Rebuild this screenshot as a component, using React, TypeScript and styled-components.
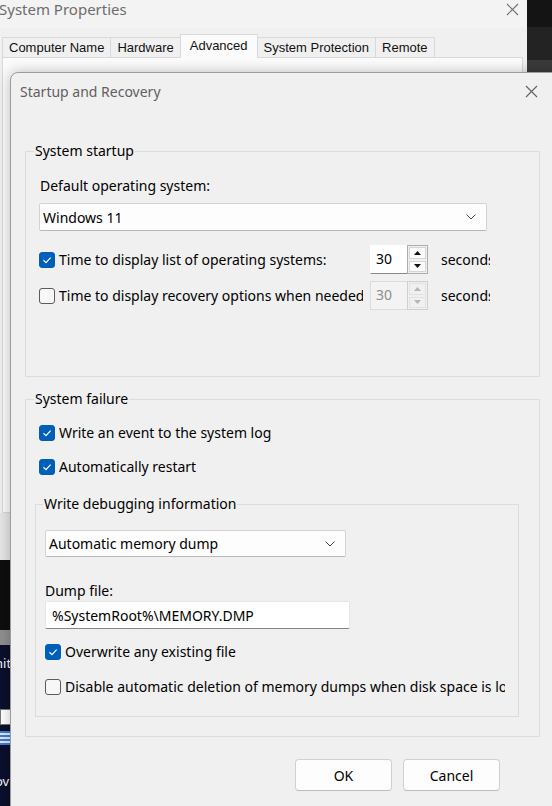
import React from 'react';
import styled, { createGlobalStyle } from 'styled-components';

const GlobalStyle = createGlobalStyle`
  *, *::before, *::after { box-sizing: border-box; }
  html, body { margin: 0; padding: 0; }
  body {
    background: #1c1c1c;
    font-family: "Noto Sans", "Open Sans", sans-serif;
    -webkit-font-smoothing: antialiased;
  }
`;

const Desktop = styled.div`
  position: relative;
  width: 552px;
  height: 806px;
  overflow: hidden;
  display: flex;
  flex-direction: column;
  background: #0b1030;
`;

/* ---------- window behind ---------- */

const BackRow = styled.div`
  display: flex;
  height: 513px;
  flex-shrink: 0;
`;

const BackWindow = styled.div`
  width: 527px;
  display: flex;
  flex-direction: column;
  background: #f0f0f0;
`;

const BackTitleBar = styled.div`
  height: 28px;
  display: flex;
  align-items: center;
  background: #f3f3f3;
  color: #6d6d6d;
  font-size: 15px;
  padding-right: 8px;
`;

const BackTitle = styled.span`
  flex: 1;
  margin-left: -1px;
  margin-top: -10px;
`;

const CloseIcon = styled.svg<{ $color: string }>`
  width: 13px;
  height: 13px;
  stroke: ${({ $color }) => $color};
  stroke-width: 1.1;
  flex-shrink: 0;
`;

const BackClose = styled.span`
  display: flex;
  margin-top: -10px;
`;

const TabStrip = styled.div`
  height: 30px;
  display: flex;
  align-items: flex-end;
  padding-left: 2px;
  font-family: "Liberation Sans", Arial, sans-serif;
  font-size: 13px;
  color: #111;
`;

const Tab = styled.div<{ $active?: boolean }>`
  height: ${({ $active }) => ($active ? 24 : 21)}px;
  padding: 0 ${({ $active }) => ($active ? 9 : 6)}px;
  display: flex;
  align-items: center;
  background: ${({ $active }) => ($active ? '#fbfbfb' : '#f0f0f0')};
  border: 1px solid #d9d9d9;
  border-bottom: ${({ $active }) => ($active ? 'none' : '1px solid #d9d9d9')};
  margin-right: -1px;
  white-space: nowrap;
  position: relative;
  z-index: ${({ $active }) => ($active ? 1 : 0)};
  padding-bottom: ${({ $active }) => ($active ? 3 : 0)}px;
`;

const TabPanel = styled.div`
  flex: 1;
  margin: -1px 4px 0 2px;
  background: #fbfbfb;
  border: 1px solid #d9d9d9;
`;

const RightDark = styled.div`
  flex: 1;
  background: linear-gradient(#141414 0 27px, #232323 27px 60px, #3a3a3a 60px);
`;

const Band = styled.div<{ $h: number; $bg: string }>`
  height: ${({ $h }) => $h}px;
  background: ${({ $bg }) => $bg};
  flex-shrink: 0;
`;

const NavyArea = styled.div`
  flex: 1;
  display: flex;
  flex-direction: column;
  background: #0a0f2c;
  color: #fff;
  font-size: 13px;
`;

const NavyText = styled.div<{ $top: number }>`
  margin-top: ${({ $top }) => $top}px;
  margin-left: -5px;
  line-height: 16px;
  white-space: nowrap;
`;

const DocIcon = styled.div`
  margin-top: 38px;
  width: 12px;
  height: 16px;
  background: #fff;
  border: 1px solid #777;
`;

const BlueLines = styled.div`
  margin-top: 6px;
  height: 14px;
  background: repeating-linear-gradient(#3d7bd6 0 2px, #dfe8f8 2px 4px);
`;

/* ---------- dialog ---------- */

const Dialog = styled.div`
  position: absolute;
  left: 10px;
  top: 72px;
  width: 560px;
  height: 760px;
  display: flex;
  flex-direction: column;
  background: #f0f0f0;
  border: 1px solid #9c9c9c;
  border-top-left-radius: 8px;
  box-shadow: 0 0 14px rgba(0, 0, 0, 0.25);
  color: #000;
  font-size: 14px;
`;

const DialogTitleBar = styled.div`
  height: 37px;
  flex-shrink: 0;
  display: flex;
  align-items: center;
  padding-left: 9px;
  padding-right: 31px;
  color: #5f5f5f;
`;

const DialogTitle = styled.span`
  flex: 1;
`;

const DialogBody = styled.div`
  padding: 31px 14px 0 14px;
  display: flex;
  flex-direction: column;
`;

const Group = styled.fieldset<{ $width: number; $top?: number }>`
  margin: ${({ $top }) => $top ?? 0}px 0 0 0;
  padding: 0;
  min-width: 0;
  width: ${({ $width }) => $width}px;
  border: 1px solid #dcdcdc;
`;

const Legend = styled.legend<{ $offset: number }>`
  margin-left: ${({ $offset }) => $offset}px;
  padding: 0 1px;
  line-height: 20px;
  font-size: 14px;
`;

const GroupContent = styled.div<{ $pad: string }>`
  display: flex;
  flex-direction: column;
  padding: ${({ $pad }) => $pad};
`;

const Label = styled.div<{ $top?: number; $lh?: number }>`
  margin-top: ${({ $top }) => $top ?? 0}px;
  line-height: ${({ $lh }) => $lh ?? 20}px;
`;

const Select = styled.div<{ $width: number; $height: number; $top?: number; $left?: number }>`
  margin-top: ${({ $top }) => $top ?? 0}px;
  margin-left: ${({ $left }) => $left ?? 0}px;
  width: ${({ $width }) => $width}px;
  height: ${({ $height }) => $height}px;
  display: flex;
  align-items: center;
  padding: 0 10px 0 3px;
  background: #fdfdfd;
  border: 1px solid #d3d3d3;
  border-bottom-color: #b8b8b8;
  border-radius: 2px;
`;

const SelectText = styled.span`
  flex: 1;
`;

const Chevron = styled.svg`
  width: 10px;
  height: 6px;
  fill: none;
  stroke: #404040;
  stroke-width: 1;
`;

const TextInput = styled.div<{ $width: number }>`
  margin-top: 1px;
  width: ${({ $width }) => $width}px;
  height: 28px;
  display: flex;
  align-items: center;
  padding-left: 6px;
  background: #fff;
  border: 1px solid #e6e6e6;
  border-bottom: 1px solid #858585;
  border-radius: 2px;
`;

const SpinRow = styled.div<{ $top: number }>`
  margin-top: ${({ $top }) => $top}px;
  margin-left: -1px;
  height: 29px;
  display: flex;
  align-items: center;
`;

const CheckRow = styled.div<{ $top?: number; $left?: number }>`
  margin-top: ${({ $top }) => $top ?? 0}px;
  margin-left: ${({ $left }) => $left ?? 0}px;
  height: 20px;
  display: flex;
  align-items: center;
  gap: 4px;
`;

const Box = styled.span<{ $checked: boolean }>`
  width: 16px;
  height: 16px;
  flex-shrink: 0;
  display: flex;
  align-items: center;
  justify-content: center;
  border-radius: 3px;
  background: ${({ $checked }) => ($checked ? '#005fb8' : '#f7f7f7')};
  border: 1px solid ${({ $checked }) => ($checked ? '#005fb8' : '#5b5b5b')};
`;

const CheckMark = styled.svg`
  width: 10px;
  height: 10px;
  fill: none;
  stroke: #fff;
  stroke-width: 1.2;
`;

const ClipLabel = styled.span<{ $width?: number; $indent?: number }>`
  ${({ $width }) => ($width ? `width: ${$width}px;` : '')}
  padding-left: ${({ $indent }) => $indent ?? 0}px;
  overflow: hidden;
  white-space: nowrap;
  line-height: 20px;
  flex-shrink: 0;
`;

const Spinner = styled.div<{ $disabled?: boolean }>`
  margin-left: 4px;
  display: flex;
  height: 29px;
  color: ${({ $disabled }) => ($disabled ? '#8e8e8e' : '#000')};
`;

const SpinValue = styled.div<{ $disabled?: boolean }>`
  width: 38px;
  height: 100%;
  padding: 1px 0 0 5px;
  line-height: 24px;
  background: ${({ $disabled }) => ($disabled ? '#f3f3f3' : '#fff')};
  border: 1px solid ${({ $disabled }) => ($disabled ? '#dcdcdc' : '#fff')};
  border-bottom: 1px solid ${({ $disabled }) => ($disabled ? '#dcdcdc' : '#8a8a8a')};
`;

const SpinButtons = styled.div<{ $disabled?: boolean }>`
  width: 21px;
  margin-left: -1px;
  display: flex;
  flex-direction: column;
  border: 1px solid ${({ $disabled }) => ($disabled ? '#cfcfcf' : '#adadad')};
  background: #f0f0f0;
`;

const SpinButton = styled.div<{ $disabled?: boolean }>`
  flex: 1;
  display: flex;
  align-items: center;
  justify-content: center;
  margin: 1px;
  background: ${({ $disabled }) => ($disabled ? '#f0f0f0' : '#fbfbfb')};
  border: 1px solid ${({ $disabled }) => ($disabled ? '#e2e2e2' : '#d6d6d6')};
`;

const Arrow = styled.svg<{ $disabled?: boolean }>`
  width: 7px;
  height: 4px;
  fill: ${({ $disabled }) => ($disabled ? '#b5b5b5' : '#111')};
`;

const Seconds = styled.span`
  margin-left: 13px;
  width: 49px;
  overflow: hidden;
  white-space: nowrap;
`;

const ButtonRow = styled.div`
  margin-top: 22px;
  width: 515px;
  padding-right: 40px;
  display: flex;
  justify-content: flex-end;
  gap: 11px;
`;

const Button = styled.button`
  width: 97px;
  height: 32px;
  font-family: inherit;
  font-size: 14px;
  color: #000;
  background: #fdfdfd;
  border: 1px solid #d0d0d0;
  border-bottom-color: #bcbcbc;
  border-radius: 4px;
  padding: 0;
`;

const Close = ({ color }: { color: string }) => (
  <CloseIcon $color={color} viewBox="0 0 13 13">
    <line x1="1" y1="1" x2="12" y2="12" />
    <line x1="12" y1="1" x2="1" y2="12" />
  </CloseIcon>
);

const Checkbox = ({ checked }: { checked: boolean }) => (
  <Box $checked={checked}>
    {checked && (
      <CheckMark viewBox="0 0 10 10">
        <polyline points="1.5,5.3 4,7.6 8.6,2.6" />
      </CheckMark>
    )}
  </Box>
);

const Dropdown = (props: { text: string; width: number; height: number; top?: number; left?: number }) => (
  <Select $width={props.width} $height={props.height} $top={props.top} $left={props.left}>
    <SelectText>{props.text}</SelectText>
    <Chevron viewBox="0 0 10 6">
      <polyline points="0.5,0.5 5,5 9.5,0.5" />
    </Chevron>
  </Select>
);

const NumberSpin = ({ value, disabled }: { value: string; disabled?: boolean }) => (
  <Spinner $disabled={disabled}>
    <SpinValue $disabled={disabled}>{value}</SpinValue>
    <SpinButtons $disabled={disabled}>
      <SpinButton $disabled={disabled}>
        <Arrow $disabled={disabled} viewBox="0 0 7 4">
          <polygon points="3.5,0 7,4 0,4" />
        </Arrow>
      </SpinButton>
      <SpinButton $disabled={disabled}>
        <Arrow $disabled={disabled} viewBox="0 0 7 4">
          <polygon points="0,0 7,0 3.5,4" />
        </Arrow>
      </SpinButton>
    </SpinButtons>
  </Spinner>
);

export default function App() {
  return (
    <>
      <GlobalStyle />
      <Desktop>
        <BackRow>
          <BackWindow>
            <BackTitleBar>
              <BackTitle>System Properties</BackTitle>
              <BackClose>
                <Close color="#707070" />
              </BackClose>
            </BackTitleBar>
            <TabStrip>
              <Tab>Computer Name</Tab>
              <Tab>Hardware</Tab>
              <Tab $active>Advanced</Tab>
              <Tab>System Protection</Tab>
              <Tab>Remote</Tab>
            </TabStrip>
            <TabPanel />
          </BackWindow>
          <RightDark />
        </BackRow>
        <Band $h={47} $bg="#e6e6e6" />
        <Band $h={70} $bg="#0e0e0e" />
        <Band $h={15} $bg="#8f8f8f" />
        <NavyArea>
          <NavyText $top={10}>nit</NavyText>
          <DocIcon />
          <BlueLines />
          <NavyText $top={28}>ov</NavyText>
        </NavyArea>

        <Dialog>
          <DialogTitleBar>
            <DialogTitle>Startup and Recovery</DialogTitle>
            <Close color="#606060" />
          </DialogTitleBar>

          <DialogBody>
            <Group $width={515}>
              <Legend $offset={8}>System startup</Legend>
              <GroupContent $pad="15px 0 66px 14px">
                <Label>Default operating system:</Label>
                <Dropdown text="Windows 11" width={448} height={28} top={7} left={-1} />
                <SpinRow $top={14}>
                  <Checkbox checked />
                  <ClipLabel $width={311} $indent={4}>
                    Time to display list of operating systems:
                  </ClipLabel>
                  <NumberSpin value="30" />
                  <Seconds>seconds</Seconds>
                </SpinRow>
                <SpinRow $top={7}>
                  <Checkbox checked={false} />
                  <ClipLabel $width={308} $indent={4} style={{ marginRight: 3 }}>
                    Time to display recovery options when needed:
                  </ClipLabel>
                  <NumberSpin value="30" disabled />
                  <Seconds>seconds</Seconds>
                </SpinRow>
              </GroupContent>
            </Group>

            <Group $width={515} $top={12}>
              <Legend $offset={8}>System failure</Legend>
              <GroupContent $pad="14px 0 19px 9px">
                <CheckRow $left={4}>
                  <Checkbox checked />
                  <ClipLabel>Write an event to the system log</ClipLabel>
                </CheckRow>
                <CheckRow $left={4} $top={14}>
                  <Checkbox checked />
                  <ClipLabel>Automatically restart</ClipLabel>
                </CheckRow>

                <Group $width={484} $top={17}>
                  <Legend $offset={7}>Write debugging information</Legend>
                  <GroupContent $pad="16px 0 19px 9px">
                    <Dropdown text="Automatic memory dump" width={301} height={27} />
                    <Label $top={25} $lh={18}>
                      Dump file:
                    </Label>
                    <TextInput $width={305}>%SystemRoot%\MEMORY.DMP</TextInput>
                    <CheckRow $top={13}>
                      <Checkbox checked />
                      <ClipLabel>Overwrite any existing file</ClipLabel>
                    </CheckRow>
                    <CheckRow $top={15}>
                      <Checkbox checked={false} />
                      <ClipLabel $width={440}>
                        Disable automatic deletion of memory dumps when disk space is low
                      </ClipLabel>
                    </CheckRow>
                  </GroupContent>
                </Group>
              </GroupContent>
            </Group>

            <ButtonRow>
              <Button>OK</Button>
              <Button>Cancel</Button>
            </ButtonRow>
          </DialogBody>
        </Dialog>
      </Desktop>
    </>
  );
}
